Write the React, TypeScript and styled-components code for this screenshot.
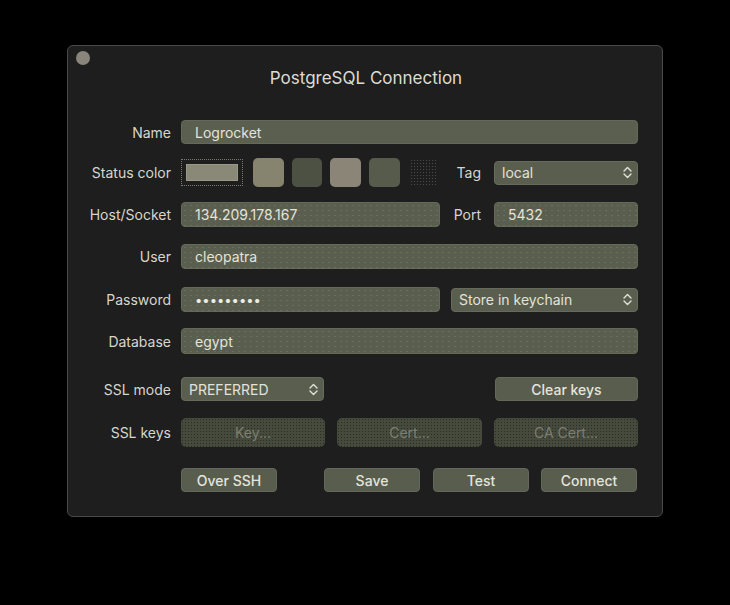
import React from "react";
import styled, { createGlobalStyle } from "styled-components";

const GlobalStyle = createGlobalStyle`
  html, body {
    margin: 0;
    padding: 0;
    background: #000;
  }
  body {
    font-family: Inter, "Noto Sans", "Liberation Sans", sans-serif;
    -webkit-font-smoothing: antialiased;
  }
`;

const SWATCHES = [
  { color: "#86836f", w: 31 },
  { color: "#4d5143", w: 30 },
  { color: "#8b8577", w: 31 },
  { color: "#565b4b", w: 31 },
];

const Chevrons = () => (
  <svg width="9" height="13" viewBox="0 0 9 13" fill="none">
    <path d="M1 5 L4.5 1.5 L8 5" stroke="#e2e2da" strokeWidth="1.4" strokeLinecap="round" strokeLinejoin="round" />
    <path d="M1 8 L4.5 11.5 L8 8" stroke="#e2e2da" strokeWidth="1.4" strokeLinecap="round" strokeLinejoin="round" />
  </svg>
);

function App() {
  return (
    <>
      <GlobalStyle />
      <Page>
        <Window>
          <TitleBar>
            <Dot />
            <Title>PostgreSQL Connection</Title>
          </TitleBar>

          <Form>
            <Row $mt={32} $h={24}>
              <Label>Name</Label>
              <Field $grain>Logrocket</Field>
            </Row>

            <Row $mt={14} $h={29}>
              <Label>Status color</Label>
              <Swatches>
                <SelectedSwatch>
                  <SwatchInner />
                </SelectedSwatch>
                {SWATCHES.map((s) => (
                  <Swatch key={s.color} $color={s.color} $w={s.w} />
                ))}
                <EmptySwatch />
              </Swatches>
              <InlineLabel>Tag</InlineLabel>
              <Select $w={144}>
                <span>local</span>
                <Chevrons />
              </Select>
            </Row>

            <Row $mt={15} $h={25}>
              <Label>Host/Socket</Label>
              <Field $w={259}>134.209.178.167</Field>
              <InlineLabel>Port</InlineLabel>
              <Field $w={144}>5432</Field>
            </Row>

            <Row $mt={17} $h={25}>
              <Label>User</Label>
              <Field>cleopatra</Field>
            </Row>

            <Row $mt={18} $h={25}>
              <Label>Password</Label>
              <Field $w={259}>
                <Dots>•••••••••</Dots>
              </Field>
              <Spacer $w={11} />
              <Select $w={187}>
                <span>Store in keychain</span>
                <Chevrons />
              </Select>
            </Row>

            <Row $mt={16} $h={26}>
              <Label>Database</Label>
              <Field>egypt</Field>
            </Row>

            <Row $mt={23} $h={24}>
              <Label>SSL mode</Label>
              <Select $w={143}>
                <span>PREFERRED</span>
                <Chevrons />
              </Select>
              <Spacer $w={171} />
              <Button $w={143}>Clear keys</Button>
            </Row>

            <Row $mt={17} $h={29}>
              <Label>SSL keys</Label>
              <KeyButtons>
                <DisabledButton>Key...</DisabledButton>
                <DisabledButton>Cert...</DisabledButton>
                <DisabledButton>CA Cert...</DisabledButton>
              </KeyButtons>
            </Row>

            <Row $mt={21} $h={24}>
              <Label />
              <Button $w={96}>Over SSH</Button>
              <Spacer $w={47} />
              <Button $w={96}>Save</Button>
              <Spacer $w={13} />
              <Button $w={96}>Test</Button>
              <Spacer $w={12} />
              <Button $w={96}>Connect</Button>
            </Row>
          </Form>
        </Window>
      </Page>
    </>
  );
}

export default App;

const Page = styled.div`
  width: 730px;
  height: 605px;
  padding-top: 45px;
  box-sizing: border-box;
  display: flex;
  justify-content: center;
  align-items: flex-start;
`;

const Window = styled.div`
  width: 596px;
  height: 472px;
  box-sizing: border-box;
  background: #1e1e1e;
  border: 1px solid #4a4a48;
  border-radius: 6px;
  padding: 5px 24px 0 8px;
`;

const TitleBar = styled.div`
  display: grid;
  grid-template-columns: 14px 1fr 14px;
  align-items: start;
`;

const Dot = styled.div`
  width: 14px;
  height: 14px;
  border-radius: 50%;
  background: #8a857a;
`;

const Title = styled.div`
  margin-top: 17px;
  text-align: center;
  font-size: 17px;
  line-height: 20px;
  color: #dcdcd4;
  padding-left: 18px;
`;

const Form = styled.div`
  display: flex;
  flex-direction: column;
`;

const Row = styled.div<{ $mt: number; $h: number }>`
  display: flex;
  align-items: center;
  margin-top: ${(p) => p.$mt}px;
  height: ${(p) => p.$h}px;
`;

const Label = styled.div`
  width: 95px;
  margin-right: 10px;
  flex-shrink: 0;
  text-align: right;
  font-size: 14px;
  color: #d6d6ce;
`;

const InlineLabel = styled.div`
  width: 41px;
  margin-right: 13px;
  flex-shrink: 0;
  text-align: right;
  font-size: 14px;
  color: #d6d6ce;
`;

const Spacer = styled.div<{ $w: number }>`
  width: ${(p) => p.$w}px;
  flex-shrink: 0;
`;

const Field = styled.div<{ $w?: number; $grain?: boolean }>`
  ${(p) => (p.$w ? `width: ${p.$w}px; flex-shrink: 0;` : "flex: 1;")}
  height: 100%;
  box-sizing: border-box;
  display: flex;
  align-items: center;
  padding: 0 13px;
  border-radius: 4px;
  background: ${(p) => (p.$grain ? "#3f4236" : "#595e4e")};
  background-image: ${(p) =>
    p.$grain
      ? "radial-gradient(#5b5f50 0.8px, transparent 0.9px)"
      : "radial-gradient(#6a6e60 0.6px, transparent 0.7px)"};
  background-size: ${(p) => (p.$grain ? "2px 2px" : "6px 5px")};
  border: 1px solid #646958;
  font-size: 14px;
  color: #e4e4dc;
`;

const Dots = styled.span`
  font-size: 13px;
  letter-spacing: 0;
  color: #eeeee6;
`;

const Select = styled.div<{ $w: number }>`
  width: ${(p) => p.$w}px;
  flex-shrink: 0;
  height: 24px;
  box-sizing: border-box;
  display: flex;
  align-items: center;
  justify-content: space-between;
  padding: 0 5px 0 7px;
  border-radius: 4px;
  background: #5a5e4e;
  border: 1px solid #666b5b;
  font-size: 14px;
  color: #e2e2da;
`;

const Swatches = styled.div`
  width: 259px;
  flex-shrink: 0;
  height: 100%;
  display: flex;
  align-items: center;
`;

const SelectedSwatch = styled.div`
  width: 62px;
  height: 27px;
  box-sizing: border-box;
  border: 1px dotted #777a6c;
  display: flex;
  align-items: center;
  justify-content: center;
  margin-right: 10px;
`;

const SwatchInner = styled.div`
  width: 52px;
  height: 17px;
  background: #8a8877;
  border: 1px solid #9a9887;
  box-sizing: border-box;
`;

const Swatch = styled.div<{ $color: string; $w: number }>`
  width: ${(p) => p.$w}px;
  height: 29px;
  border-radius: 5px;
  background: ${(p) => p.$color};
  margin-right: 8px;
  flex-shrink: 0;
`;

const EmptySwatch = styled.div`
  width: 27px;
  height: 27px;
  border-radius: 4px;
  background-image: radial-gradient(#4a4a46 0.7px, transparent 0.8px);
  background-size: 3px 3px;
  margin-left: 2px;
`;

const Button = styled.div<{ $w: number }>`
  width: ${(p) => p.$w}px;
  flex-shrink: 0;
  height: 24px;
  box-sizing: border-box;
  display: flex;
  align-items: center;
  justify-content: center;
  border-radius: 4px;
  background: #585d4d;
  border: 1px solid #63685a;
  font-size: 14px;
  font-weight: 500;
  color: #e4e4dc;
`;

const KeyButtons = styled.div`
  flex: 1;
  height: 100%;
  display: grid;
  grid-template-columns: 144px 145px 144px;
  justify-content: space-between;
`;

const DisabledButton = styled.div`
  height: 100%;
  display: flex;
  align-items: center;
  justify-content: center;
  border-radius: 5px;
  background: #464a3c;
  background-image: radial-gradient(#2a2c25 0.7px, transparent 0.8px);
  background-size: 3px 3px;
  font-size: 14px;
  color: #7c7f72;
`;
